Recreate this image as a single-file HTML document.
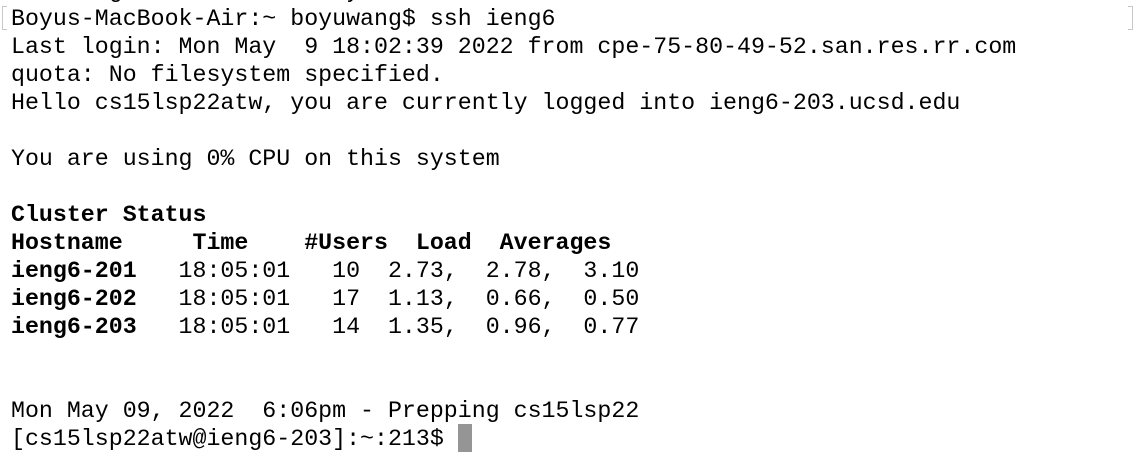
<!DOCTYPE html>
<html><head><meta charset="utf-8"><style>
html,body{margin:0;padding:0;background:#fff;width:1138px;height:466px;overflow:hidden}
pre{position:absolute;left:11px;top:-23px;margin:0;font-family:"Liberation Mono",monospace;font-size:23.27px;line-height:28px;color:#000;white-space:pre}
b{font-weight:bold}
.cur{display:inline-block;width:14px;height:28px;background:#959595;vertical-align:top;margin-top:-1px}
.mk{position:absolute;top:6px;width:4px;height:22px;border:1px solid #c8c8c8}
</style></head><body>
<div class="mk" style="left:2px;border-right:none"></div>
<div class="mk" style="left:1128px;border-left:none"></div>
<pre>  Ending the Lesson Early
Boyus-MacBook-Air:~ boyuwang$ ssh ieng6
Last login: Mon May  9 18:02:39 2022 from cpe-75-80-49-52.san.res.rr.com
quota: No filesystem specified.
Hello cs15lsp22atw, you are currently logged into ieng6-203.ucsd.edu

You are using 0% CPU on this system

<b>Cluster Status</b>
<b>Hostname     Time    #Users  Load  Averages</b>
<b>ieng6-201</b>   18:05:01   10  2.73,  2.78,  3.10
<b>ieng6-202</b>   18:05:01   17  1.13,  0.66,  0.50
<b>ieng6-203</b>   18:05:01   14  1.35,  0.96,  0.77


Mon May 09, 2022  6:06pm - Prepping cs15lsp22
[cs15lsp22atw@ieng6-203]:~:213$ <span class="cur"></span></pre>
</body></html>
